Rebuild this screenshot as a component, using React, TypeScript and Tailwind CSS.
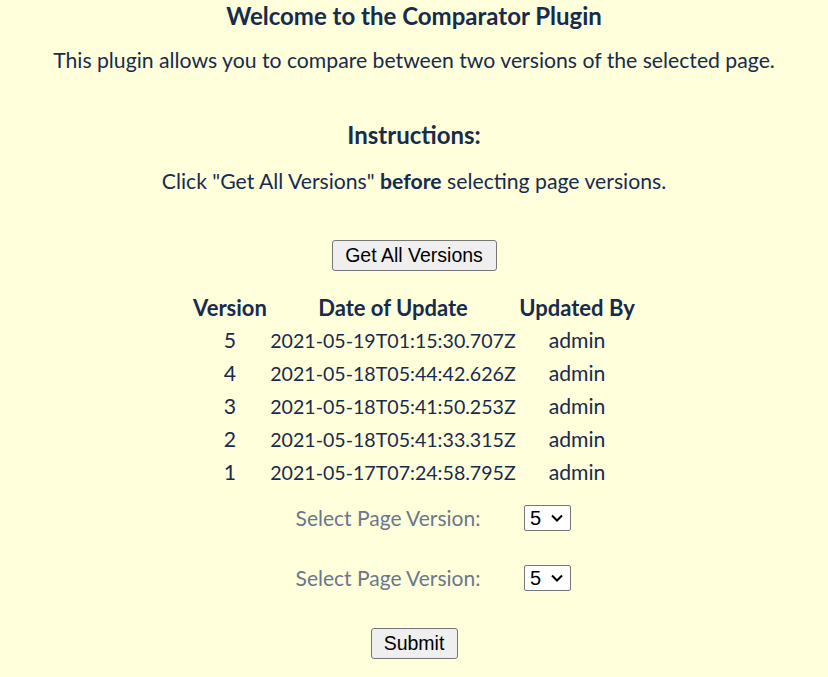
import { useState } from 'react';

const versions = [
    { version: 5, date: '2021-05-19T01:15:30.707Z', by: 'admin' },
    { version: 4, date: '2021-05-18T05:44:42.626Z', by: 'admin' },
    { version: 3, date: '2021-05-18T05:41:50.253Z', by: 'admin' },
    { version: 2, date: '2021-05-18T05:41:33.315Z', by: 'admin' },
    { version: 1, date: '2021-05-17T07:24:58.795Z', by: 'admin' },
];

function VersionSelect({ value, onChange }: { value: number; onChange: (v: number) => void }) {
    return (
        <div className="relative w-[47px] h-[26px]">
            <select
                value={value}
                onChange={(e) => onChange(Number(e.target.value))}
                className="appearance-none w-full h-full bg-white border border-[#767676] rounded-[2px] pl-[5px] text-[20px] leading-none text-black font-['Liberation_Sans',Arial,sans-serif] outline-none"
            >
                {versions.map((v) => (
                    <option key={v.version} value={v.version}>
                        {v.version}
                    </option>
                ))}
            </select>
            <svg
                className="pointer-events-none absolute right-[8px] top-[9px]"
                width="12"
                height="8"
                viewBox="0 0 12 8"
                fill="none"
                stroke="#000"
                strokeWidth="2"
            >
                <path d="M1 1.5l5 5 5-5" />
            </svg>
        </div>
    );
}

export default function App() {
    const [first, setFirst] = useState(5);
    const [second, setSecond] = useState(5);

    return (
        <div className="min-h-[677px] w-full bg-[#ffffdc] text-[#172b4d] font-['Lato','Noto_Sans',sans-serif] flex flex-col items-center">
            <h1 className="text-[24px] font-bold leading-[32px]">Welcome to the Comparator Plugin</h1>
            <p className="mt-[12px] text-[21.2px] leading-[32px] whitespace-nowrap">
                This plugin allows you to compare between two versions of the selected page.
            </p>

            <h2 className="mt-[43px] text-[24px] font-bold leading-[32px]">Instructions:</h2>
            <p className="mt-[14px] text-[21.2px] leading-[32px] whitespace-nowrap">
                Click "Get All Versions" <strong className="font-bold">before</strong> selecting page versions.
            </p>

            <button className="mt-[43px] h-[31px] w-[165px] bg-[#efefef] border border-[#767676] rounded-[3px] text-black text-[19.5px] font-['Liberation_Sans',Arial,sans-serif]">
                Get All Versions
            </button>

            <div className="mt-[20px] grid grid-cols-[77px_249px_119px] text-[21.2px] whitespace-nowrap">
                <div className="h-[33px] flex items-center justify-center font-bold text-[22px]">Version</div>
                <div className="h-[33px] flex items-center justify-center font-bold text-[22px]">Date of Update</div>
                <div className="h-[33px] flex items-center justify-center font-bold text-[22px]">Updated By</div>
                {versions.map((v) => (
                    <div key={v.version} className="contents">
                        <div className="h-[33px] flex items-center justify-center">{v.version}</div>
                        <div className="h-[33px] flex items-center justify-center text-[19.6px]">{v.date}</div>
                        <div className="h-[33px] flex items-center justify-center">{v.by}</div>
                    </div>
                ))}
            </div>

            <div className="mt-[16px] grid grid-cols-[267px_52px] items-center">
                <label className="text-center text-[21px] leading-[26px] text-[#6b778c] whitespace-nowrap">Select Page Version:</label>
                <div className="flex justify-center">
                    <VersionSelect value={first} onChange={setFirst} />
                </div>
            </div>
            <div className="mt-[34px] grid grid-cols-[267px_52px] items-center">
                <label className="text-center text-[21px] leading-[26px] text-[#6b778c] whitespace-nowrap">Select Page Version:</label>
                <div className="flex justify-center">
                    <VersionSelect value={second} onChange={setSecond} />
                </div>
            </div>

            <button className="mt-[37px] h-[31px] w-[87px] bg-[#efefef] border border-[#767676] rounded-[3px] text-black text-[19.5px] font-['Liberation_Sans',Arial,sans-serif]">
                Submit
            </button>
        </div>
    );
}
